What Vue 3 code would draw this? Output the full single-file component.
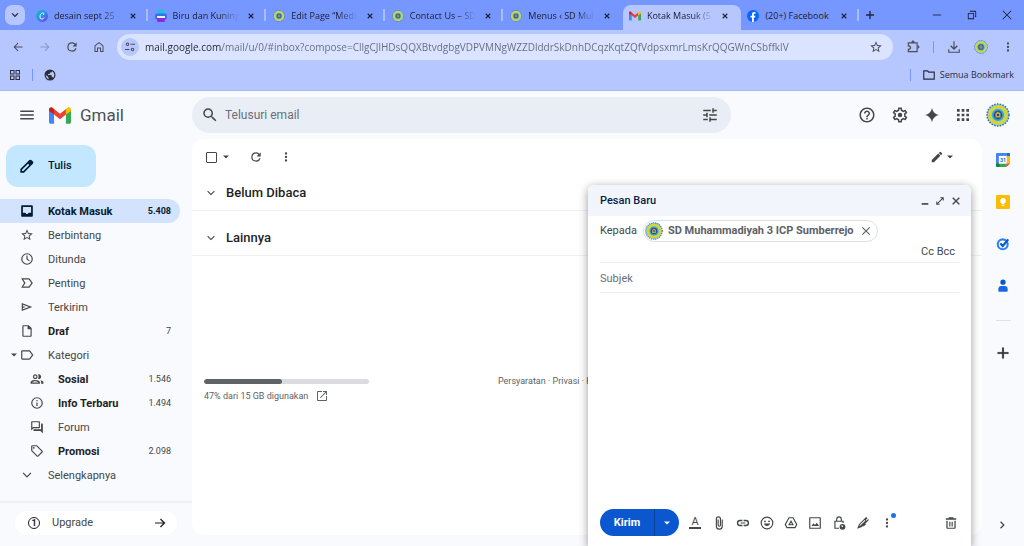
<script setup>
import { computed, h, ref } from 'vue';

const icons = {
  menu: 'M3 18h18v-2H3v2zm0-5h18v-2H3v2zm0-7v2h18V6H3z',
  search: 'M15.5 14h-.79l-.28-.27A6.47 6.47 0 0 0 16 9.5 6.5 6.5 0 1 0 9.5 16c1.61 0 3.09-.59 4.23-1.57l.27.28v.79l5 4.99L20.49 19l-4.99-5zm-6 0C7.01 14 5 11.99 5 9.5S7.01 5 9.5 5 14 7.01 14 9.5 11.99 14 9.5 14z',
  tune: 'M3 17v2h6v-2H3zM3 5v2h10V5H3zm10 16v-2h8v-2h-8v-2h-2v6h2zM7 9v2H3v2h4v2h2V9H7zm14 4v-2H11v2h10zm-6-4h2V7h4V5h-4V3h-2v6z',
  help: 'M11 18h2v-2h-2v2zm1-16C6.48 2 2 6.48 2 12s4.48 10 10 10 10-4.48 10-10S17.52 2 12 2zm0 18c-4.41 0-8-3.59-8-8s3.59-8 8-8 8 3.59 8 8-3.59 8-8 8zm0-14c-2.21 0-4 1.79-4 4h2c0-1.1.9-2 2-2s2 .9 2 2c0 2-3 1.75-3 5h2c0-2.25 3-2.5 3-5 0-2.21-1.79-4-4-4z',
  settings: 'M19.43 12.98c.04-.32.07-.64.07-.98 0-.34-.03-.66-.07-.98l2.11-1.65c.19-.15.24-.42.12-.64l-2-3.46c-.09-.16-.26-.25-.44-.25-.06 0-.12.01-.17.03l-2.49 1c-.52-.4-1.08-.73-1.69-.98l-.38-2.65C14.46 2.18 14.25 2 14 2h-4c-.25 0-.46.18-.49.42l-.38 2.65c-.61.25-1.17.59-1.69.98l-2.49-1c-.06-.02-.12-.03-.18-.03-.17 0-.34.09-.43.25l-2 3.46c-.13.22-.07.49.12.64l2.11 1.65c-.04.32-.07.65-.07.98 0 .33.03.66.07.98l-2.11 1.65c-.19.15-.24.42-.12.64l2 3.46c.09.16.26.25.44.25.06 0 .12-.01.17-.03l2.49-1c.52.4 1.08.73 1.69.98l.38 2.65c.03.24.24.42.49.42h4c.25 0 .46-.18.49-.42l.38-2.65c.61-.25 1.17-.59 1.69-.98l2.49 1c.06.02.12.03.18.03.17 0 .34-.09.43-.25l2-3.46c.12-.22.07-.49-.12-.64l-2.11-1.65zm-1.98-1.71c.04.31.05.52.05.73 0 .21-.02.43-.05.73l-.14 1.13.89.7 1.08.84-.7 1.21-1.27-.51-1.04-.42-.9.68c-.43.32-.84.56-1.25.73l-1.06.43-.16 1.13-.2 1.35h-1.4l-.19-1.35-.16-1.13-1.06-.43c-.43-.18-.83-.41-1.23-.71l-.91-.7-1.06.43-1.27.51-.7-1.21 1.08-.84.89-.7-.14-1.13c-.03-.31-.05-.54-.05-.74s.02-.43.05-.73l.14-1.13-.89-.7-1.08-.84.7-1.21 1.27.51 1.04.42.9-.68c.43-.32.84-.56 1.25-.73l1.06-.43.16-1.13.2-1.35h1.39l.19 1.35.16 1.13 1.06.43c.43.18.83.41 1.23.71l.91.7 1.06-.43 1.27-.51.7 1.21-1.07.85-.89.7.14 1.13zM12 9a3 3 0 1 0 0 6 3 3 0 0 0 0-6z',
  sparkle: 'M12 1c1 6 5 10 11 11-6 1-10 5-11 11-1-6-5-10-11-11 6-1 10-5 11-11z',
  apps: 'M3 3h4v4H3zm7 0h4v4h-4zm7 0h4v4h-4zM3 10h4v4H3zm7 0h4v4h-4zm7 0h4v4h-4zM3 17h4v4H3zm7 0h4v4h-4zm7 0h4v4h-4z',
  refresh: 'M17.65 6.35A7.96 7.96 0 0 0 12 4a8 8 0 1 0 7.73 10h-2.08A5.99 5.99 0 0 1 12 18a6 6 0 1 1 0-12c1.66 0 3.14.69 4.22 1.78L13 11h7V4l-2.35 2.35z',
  more: 'M12 8a2 2 0 1 0 0-4 2 2 0 0 0 0 4zm0 2a2 2 0 1 0 0 4 2 2 0 0 0 0-4zm0 6a2 2 0 1 0 0 4 2 2 0 0 0 0-4z',
  caret: 'M6 9l6 6 6-6z',
  edit: 'M3 17.25V21h3.75L17.81 9.94l-3.75-3.75L3 17.25zM20.71 7.04a1 1 0 0 0 0-1.41l-2.34-2.34a1 1 0 0 0-1.41 0l-1.83 1.83 3.75 3.75 1.83-1.83z',
  pen: 'M2 22v-5.500L13 5.500l2-2c1.400-1.400 2.800-1.400 4 0L20.500 5c1.400 1.200 1.400 2.600 0 4l-2 2L7.500 22zm2.500-2.500h2L15.500 10.500l-2-2-9 9z',
  inbox: 'M20 2H4c-1.100 0-2 .9-2 2v16c0 1.100.9 2 2 2h16c1.100 0 2-.9 2-2V4c0-1.100-.9-2-2-2zm-1 13h-4l-2 2h-2l-2-2H5V5h14v10z',
  star: 'M22 9.240l-7.190-.62L12 2 9.190 8.630 2 9.240l5.460 4.730L5.820 21 12 17.270 18.180 21l-1.630-7.030L22 9.240zM12 15.400l-3.760 2.270 1-4.280-3.320-2.880 4.380-.38L12 6.100l1.710 4.040 4.380.38-3.320 2.880 1 4.280L12 15.400z',
  clock: 'M12 2a10 10 0 1 0 0 20 10 10 0 0 0 0-20zm0 18a8 8 0 1 1 0-16 8 8 0 0 1 0 16zm1-14h-2v6.500l4.500 3.500 1.200-1.500-3.700-2.800z',
  important: 'M15 20H2l5-8-5-8h13c.8 0 1.400.3 1.800.9L22 12l-5.200 7.100c-.4.6-1 .9-1.800.9zm-9.500-2H15l4.500-6L15 6H5.500l4 6z',
  send: 'M3 19V5l18 7-18 7zm2-3l10.500-4L5 8v2.800l5 1.200-5 1.200V16z',
  draft: 'M15 2H6c-1.100 0-2 .9-2 2v16c0 1.100.9 2 2 2h12c1.100 0 2-.9 2-2V7l-5-5zM6 20V4h7v5h5v11H6z',
  label: 'M17.600 4.800C17.300 4.300 16.700 4 16 4H4c-1.100 0-2 .9-2 2v12c0 1.100.9 2 2 2h12c.7 0 1.300-.3 1.600-.8L23 12zM16 18H4V6h12l4.500 6z',
  people: 'M9 13.750c-2.340 0-8 1.170-8 4V20h16v-2.250c0-2.830-5.660-4-8-4zM3.500 18c.84-1 3.710-2.250 5.500-2.250s4.660 1.250 5.500 2.250h-11zM9 12c2.200 0 4-1.800 4-4s-1.800-4-4-4-4 1.800-4 4 1.800 4 4 4zm0-6a2 2 0 1 1 0 4 2 2 0 0 1 0-4zm8.500 8c1 .8 1.500 2 1.500 3.500V20h4v-2.500c0-2.020-3-3.200-5.500-3.500zM15 12c2.200 0 4-1.800 4-4s-1.800-4-4-4c-.54 0-1.040.13-1.500.35.9 1 1.300 2.200 1.300 3.650s-.4 2.700-1.300 3.650c.46.22.96.35 1.500.35z',
  info: 'M11 7h2v2h-2zm0 4h2v6h-2zm1-9a10 10 0 1 0 0 20 10 10 0 0 0 0-20zm0 18a8 8 0 1 1 0-16 8 8 0 0 1 0 16z',
  forum: 'M15 4v8H5.200L4 13.200V4h11m1-2H3c-.55 0-1 .45-1 1v15l4-4h10c.55 0 1-.45 1-1V3c0-.55-.45-1-1-1zm5 4h-2v10H6v2c0 .55.450 1 1 1h11l4 4V7c0-.55-.45-1-1-1z',
  tag: 'M21.410 11.580l-9-9C12.050 2.220 11.550 2 11 2H4c-1.100 0-2 .9-2 2v7c0 .55.22 1.050.59 1.420l9 9c.36.36.86.58 1.410.58s1.050-.22 1.410-.59l7-7c.37-.36.59-.86.59-1.410s-.23-1.060-.59-1.420zM13 20.010L4 11V4h7l9 9zM6.500 5a1.500 1.500 0 1 0 0 3 1.500 1.500 0 0 0 0-3z',
  chevron: 'M6 7.500l6 6 6-6L19.500 9 12 16.500 4.500 9z',
  next: 'M8 4.500l7.500 7.500L8 19.500l-1.800-1.800 5.700-5.700-5.700-5.700z',
  external: 'M20 20H4V4h8V2H4c-1.100 0-2 .9-2 2v16c0 1.100.9 2 2 2h16c1.100 0 2-.9 2-2v-8h-2v8zM14 2v2h4.600L7.800 14.800l1.400 1.400L20 5.400V10h2V2h-8z',
  close: 'M19 6.400L17.600 5 12 10.600 6.400 5 5 6.400l5.600 5.600L5 17.600 6.400 19l5.600-5.600 5.600 5.600 1.400-1.400-5.600-5.600z',
  closeBold: 'M20 6.500L17.500 4 12 9.500 6.500 4 4 6.500 9.500 12 4 17.500 6.500 20l5.500-5.500 5.500 5.500 2.500-2.500-5.500-5.500z',
  plus: 'M11 3h2v8h8v2h-8v8h-2v-8H3v-2h8z',
  back: 'M21 11H6.800l6-6L11.400 3.600 3 12l8.400 8.400 1.400-1.400-6-6H21z',
  forward: 'M3 11h14.200l-6-6 1.400-1.400L21 12l-8.400 8.400-1.400-1.400 6-6H3z',
  arrow: 'M2 10.800h16l-6-6L13.800 3l9 9-9 9-1.800-1.800 6-6H2z',
  home: 'M12 2L3 9v13h7v-7h4v7h7V9zm0 2.600l7 5.400v10h-3v-7H8v7H5V10z',
  grid: 'M2 2h9v9H2zm2 2v5h5V4zm9-2h9v9h-9zm2 2v5h5V4zM2 13h9v9H2zm2 2v5h5v-5zm9-2h9v9h-9zm2 2v5h5v-5z',
  globe: 'M12 1a11 11 0 1 0 0 22 11 11 0 0 0 0-22zM10 20.500c-4-1-6.500-4-6.500-8.500l5 4v2c0 1 .5 1.500 1.500 1.500zm8.500-3c-.5-1-1-1.500-2-1.500h-1v-3c0-.6-.4-1-1-1H8v-2h3c.6 0 1-.4 1-1V7h2c1.100 0 2-.9 2-2v-.6c5 2.500 6 8.600 2.500 13.100z',
  extension: 'M9.500 3.500a2.500 2.500 0 0 1 5 0V4H20v5.500h.5a2.500 2.500 0 0 1 0 5H20V21H3v-6h1.500a1.800 1.800 0 0 0 0-4H3V4h6.500zM5 6v3c5 .2 5 8 0 8.200V19h13v-6.500h2.500v-1H18V6z',
  download: 'M11 2h2v11l4-4 1.500 1.500L12 17l-6.500-6.500L7 9l4 4zM2 16h2v4h16v-4h2v6H2z',
  folder: 'M2 4h8l2 2h10v14H2zm2 2v12h16V8h-9L9 6z',
  site: 'M7 3a3.500 3.500 0 1 0 0 7 3.500 3.500 0 0 0 0-7zm0 2a1.500 1.500 0 1 1 0 3 1.500 1.500 0 0 1 0-3zm6 .5h9v2h-9zM2 16h9v2H2zm15-2.500a3.500 3.500 0 1 0 0 7 3.500 3.500 0 0 0 0-7zm0 2a1.500 1.500 0 1 1 0 3 1.500 1.500 0 0 1 0-3z',
  minimize: 'M2 11h20v2H2z',
  restore: 'M2 7h15v15H2zm2 2v11h11V9zm3-7h12c1.700 0 3 1.300 3 3v12h-3v-2h1V5c0-.6-.4-1-1-1H7z',
  windowClose: 'M21 4.200L19.800 3 12 10.800 4.200 3 3 4.200l7.800 7.800L3 19.800 4.200 21l7.800-7.800 7.800 7.800 1.200-1.200-7.800-7.800z',
  underscore: 'M4 17h16v4H4z',
  expand: 'M13 3h8v8h-2.500V7.300L7.300 18.500H11V21H3v-8h2.500v3.700L16.700 5.500H13z',
  attach: 'M17.500 6v11.500c0 2.800-2.200 5-5 5s-5-2.200-5-5V5c0-2 1.500-3.500 3.500-3.500S14.500 3 14.500 5v10.500c0 1.200-.8 2-2 2s-2-.8-2-2V6M7.500 6v11',
  link: 'M3.900 12c0-1.710 1.390-3.100 3.100-3.100h4V6.500H7a5.500 5.500 0 0 0 0 11h4v-2.400H7c-1.710 0-3.100-1.390-3.100-3.100zM8 13h8v-2H8v2zm9-6.500h-4v2.400h4a3.100 3.100 0 0 1 0 6.200h-4v2.400h4a5.500 5.500 0 0 0 0-11z',
  emoji: 'M12 1a11 11 0 1 0 0 22 11 11 0 0 0 0-22zm0 20a9 9 0 1 1 0-18 9 9 0 0 1 0 18zM8.500 7.500a1.600 1.600 0 1 0 0 3.200 1.600 1.600 0 0 0 0-3.200zm7 0a1.600 1.600 0 1 0 0 3.200 1.600 1.600 0 0 0 0-3.200zM6.500 13c1.800 5.600 9.200 5.600 11 0z',
  drive: 'M8 2h8l7 12.500L19.500 21h-15L1 14.500zm1.200 2L3.300 14.500 5.700 19h12.600l2.400-4.500L14.800 4zM12 7l5 9H7zm0 4l-1.800 3.200h3.600z',
  image: 'M21 2H3c-.6 0-1 .4-1 1v18c0 .6.4 1 1 1h18c.6 0 1-.4 1-1V3c0-.6-.4-1-1-1zm-1 18H4V4h16zM6 17l3.500-4.500 2.500 3 3-4L19 17z',
  lock: 'M17 8V5.500a5 5 0 0 0-10 0V8H4v14h8v-2H6V10h12v2h2V8zM9 8V5.500a3 3 0 0 1 6 0V8zm9 5.500a5 5 0 1 0 0 10 5 5 0 0 0 0-10zm1 5.500h-2.500v-3.500H18v2.200h1z',
  signature: 'M2 22l3-8L16 3c1-1 2-1 3 0l.8.8-3 3L18 8l3-3c1 1 1 2 0 3L10 19zm4-4.500L16 8l-1.300-1.300L6.500 15zM12 17l4-4 1.200 1.200-4 4z',
  trash: 'M8 2h8v2h5v2.500H3V4h5zM4 8h16v12c0 1.100-.9 2-2 2H6c-1.100 0-2-.9-2-2zm2.200 0v12h11.600V8zM9 10h2v8H9zm4 0h2v8h-2z',
};

const Icon = (props) => h('svg', { class: 'icon', viewBox: '0 0 24 24', 'aria-hidden': 'true' }, [
  h('path', { d: icons[props.name] }),
]);
Icon.props = ['name'];

const tabs = [
  { title: 'desain sept 25 -', icon: 'canva' },
  { title: 'Biru dan Kuning', icon: 'print' },
  { title: 'Edit Page “Medi', icon: 'emblem' },
  { title: 'Contact Us – SD', icon: 'emblem' },
  { title: 'Menus ‹ SD Muh', icon: 'emblem' },
  { title: 'Kotak Masuk (5.', icon: 'gmail', active: true },
  { title: '(20+) Facebook', icon: 'facebook' },
];

const folders = [
  { name: 'Kotak Masuk', icon: 'inbox', count: '5.408', bold: true, active: true },
  { name: 'Berbintang', icon: 'star' },
  { name: 'Ditunda', icon: 'clock' },
  { name: 'Penting', icon: 'important' },
  { name: 'Terkirim', icon: 'send' },
  { name: 'Draf', icon: 'draft', count: '7', bold: true },
  { name: 'Kategori', icon: 'label', open: true },
  { name: 'Sosial', icon: 'people', count: '1.546', bold: true, nested: true },
  { name: 'Info Terbaru', icon: 'info', count: '1.494', bold: true, nested: true },
  { name: 'Forum', icon: 'forum', nested: true },
  { name: 'Promosi', icon: 'tag', count: '2.098', bold: true, nested: true },
  { name: 'Selengkapnya', icon: 'chevron' },
];

const sections = ['Belum Dibaca', 'Lainnya'];

const composeTools = [
  { name: 'link', label: 'Sisipkan link' },
  { name: 'emoji', label: 'Sisipkan emoji' },
  { name: 'drive', label: 'Sisipkan file dari Drive' },
  { name: 'image', label: 'Sisipkan foto' },
  { name: 'lock', label: 'Mode rahasia' },
  { name: 'signature', label: 'Sisipkan tanda tangan' },
];

const url = ref('mail.google.com/mail/u/0/#inbox?compose=CllgCJlHDsQQXBtvdgbgVDPVMNgWZZDlddrSkDnhDCqzKqtZQfVdpsxmrLmsKrQQGWnCSbffklV');
const query = ref('');
const allSelected = ref(false);
const subject = ref('');
const message = ref('');
const storageUsed = ref(47);
const storageStyle = computed(() => ({ width: `${storageUsed.value}%` }));
</script>

<template>
  <div class="browser">
    <svg class="sprites" aria-hidden="true">
      <symbol id="emblem" viewBox="0 0 24 24">
        <circle cx="12" cy="12" r="11" fill="#8fc9e0" stroke="#3b6ea8" stroke-width="1.500" stroke-dasharray="1.500 1.300" />
        <circle cx="12" cy="12" r="8.300" fill="none" stroke="#d8d52c" stroke-width="3" />
        <circle cx="12" cy="12" r="6" fill="#3fa4bd" />
        <circle cx="12" cy="12" r="4.400" fill="#24508f" />
        <path d="M9.500 10.500l2.500-2 2.500 2v4h-5z" fill="#c8a94c" />
        <path d="M11 11h2v2h-2z" fill="#1c4585" />
      </symbol>
      <symbol id="gmail" viewBox="0 0 24 18">
        <path d="M0 3v13.400C0 17.300.7 18 1.600 18h3.900V7.500z" fill="#4285f4" />
        <path d="M24 3v13.400c0 .9-.7 1.600-1.600 1.600h-3.900V7.500z" fill="#34a853" />
        <path d="M5.500 2L12 7l6.500-5v6L12 13 5.500 8z" fill="#ea4335" />
        <path d="M0 3.500V2.400C0 .4 2.300-.7 3.900.5L5.500 2v6L0 4z" fill="#c5221f" />
        <path d="M24 3.500V2.400c0-2-2.300-3.100-3.900-1.900L18.500 2v6L24 4z" fill="#fbbc04" />
      </symbol>
      <linearGradient id="canva-fill" x1="0" y1="0" x2="1" y2="1">
        <stop offset="0" stop-color="#00c4cc" />
        <stop offset="0.500" stop-color="#2f8fe8" />
        <stop offset="1" stop-color="#7d2ae8" />
      </linearGradient>
      <symbol id="canva" viewBox="0 0 24 24">
        <circle cx="12" cy="12" r="12" fill="url(#canva-fill)" />
        <path d="M15.500 9c1-2-.5-3.500-2.500-3-3 .7-5 4-5 7.500s2 5 4.500 4.500c1.500-.3 2.700-1.300 3.500-2.500" fill="none" stroke="#fff" stroke-width="2" stroke-linecap="round" />
      </symbol>
      <symbol id="print" viewBox="0 0 24 24">
        <path d="M6 0h12l2 8H4z" fill="#16c7d6" />
        <rect y="7" width="24" height="12" rx="4" fill="#3b6fe6" />
        <path d="M3 16h18l-2 8H5z" fill="#8a2be2" />
        <path d="M4 12h16v4H4z" fill="#e8f2ff" />
      </symbol>
      <symbol id="facebook" viewBox="0 0 24 24">
        <circle cx="12" cy="12" r="12" fill="#0866ff" />
        <path d="M10 24v-9H7v-3.500h3V9c0-3.200 1.800-4.800 4.600-4.800l2.400.2v3h-1.600c-1.300 0-1.700.8-1.700 1.700v2.400h3.100l-.6 3.500h-2.500v9z" fill="#fff" />
      </symbol>
    </svg>

    <div class="tab-strip">
      <button type="button" class="tab-search" aria-label="Telusuri tab"><Icon name="chevron" class="icon--10 icon--heavy" /></button>
      <div class="tabs" role="tablist">
        <div v-for="tab in tabs" :key="tab.title" class="tab" :class="{ 'tab--active': tab.active }" role="tab">
          <svg class="tab__icon"><use :href="`#${tab.icon}`" /></svg>
          <span class="tab__title">{{ tab.title }}</span>
          <button type="button" class="tab__close" aria-label="Tutup tab"><Icon name="closeBold" class="icon--8" /></button>
        </div>
      </div>
      <button type="button" class="new-tab" aria-label="Tab baru"><Icon name="plus" class="icon--10 icon--heavy" /></button>
      <div class="window-controls">
        <button type="button" aria-label="Minimalkan"><Icon name="minimize" class="icon--10" /></button>
        <button type="button" aria-label="Pulihkan"><Icon name="restore" class="icon--10" /></button>
        <button type="button" aria-label="Tutup"><Icon name="windowClose" class="icon--12" /></button>
      </div>
    </div>

    <div class="chrome">
      <div class="toolbar">
        <button type="button" aria-label="Kembali"><Icon name="back" class="icon--12" /></button>
        <button type="button" class="is-disabled" aria-label="Maju"><Icon name="forward" class="icon--12" /></button>
        <button type="button" aria-label="Muat ulang"><Icon name="refresh" class="icon--14" /></button>
        <button type="button" aria-label="Beranda"><Icon name="home" class="icon--12" /></button>
        <div class="omnibox">
          <button type="button" class="omnibox__site" aria-label="Info situs"><Icon name="site" class="icon--12" /></button>
          <input v-model="url" class="omnibox__input" type="text" aria-label="Alamat" />
          <button type="button" class="omnibox__star" aria-label="Bookmark"><Icon name="star" class="icon--14" /></button>
        </div>
        <div class="toolbar__end">
          <button type="button" aria-label="Ekstensi"><Icon name="extension" class="icon--14" /></button>
          <span class="divider"></span>
          <button type="button" aria-label="Download"><Icon name="download" class="icon--14" /></button>
          <button type="button" aria-label="Profil"><svg class="emblem emblem--14"><use href="#emblem" /></svg></button>
          <button type="button" aria-label="Menu"><Icon name="more" class="icon--14" /></button>
        </div>
      </div>
      <div class="bookmarks">
        <button type="button" aria-label="Aplikasi"><Icon name="grid" class="icon--12" /></button>
        <span class="divider"></span>
        <button type="button" aria-label="Bookmark situs"><Icon name="globe" class="icon--12" /></button>
        <span class="divider bookmarks__divider"></span>
        <button type="button" class="bookmarks__all"><Icon name="folder" class="icon--14" />Semua Bookmark</button>
      </div>
    </div>

    <div class="mail">
      <header class="header">
        <div class="brand">
          <button type="button" aria-label="Menu utama"><Icon name="menu" class="icon--18" /></button>
          <svg class="brand__logo"><use href="#gmail" /></svg>
          <span class="brand__name">Gmail</span>
        </div>
        <label class="search">
          <Icon name="search" class="icon--18" />
          <input v-model="query" type="text" placeholder="Telusuri email" aria-label="Telusuri email" />
          <button type="button" aria-label="Opsi penelusuran"><Icon name="tune" class="icon--18" /></button>
        </label>
        <div class="header__actions">
          <button type="button" aria-label="Dukungan"><Icon name="help" class="icon--18" /></button>
          <button type="button" aria-label="Setelan"><Icon name="settings" class="icon--18" /></button>
          <button type="button" aria-label="Gemini"><Icon name="sparkle" /></button>
          <button type="button" aria-label="Aplikasi Google"><Icon name="apps" /></button>
          <button type="button" aria-label="Akun"><svg class="emblem emblem--24"><use href="#emblem" /></svg></button>
        </div>
      </header>

      <div class="layout">
        <aside class="sidebar">
          <button type="button" class="compose-button"><Icon name="pen" />Tulis</button>
          <nav class="folders">
            <a
              v-for="folder in folders"
              :key="folder.name"
              href="#"
              class="folder"
              :class="{ 'folder--active': folder.active, 'folder--bold': folder.bold, 'folder--nested': folder.nested }"
            >
              <span class="folder__caret"><Icon v-if="folder.open" name="caret" class="icon--12" /></span>
              <Icon :name="folder.icon" class="icon--14" />
              <span class="folder__name">{{ folder.name }}</span>
              <span v-if="folder.count" class="folder__count">{{ folder.count }}</span>
            </a>
          </nav>
          <div class="upgrade">
            <button type="button" class="upgrade__button">
              <span class="upgrade__badge">1</span>
              Upgrade
              <Icon name="arrow" class="icon--12 upgrade__arrow" />
            </button>
          </div>
        </aside>

        <main class="inbox">
          <div class="actions">
            <input v-model="allSelected" type="checkbox" class="actions__check" aria-label="Pilih semua" />
            <button type="button" aria-label="Pilih"><Icon name="caret" class="icon--12" /></button>
            <button type="button" class="actions__refresh" aria-label="Muat ulang"><Icon name="refresh" class="icon--14" /></button>
            <button type="button" class="actions__more" aria-label="Lainnya"><Icon name="more" class="icon--14" /></button>
            <button type="button" class="actions__input" aria-label="Alat input">
              <Icon name="edit" class="icon--14" /><Icon name="caret" class="icon--12" />
            </button>
          </div>
          <section v-for="section in sections" :key="section" class="section">
            <Icon name="chevron" class="icon--12" />
            <h2>{{ section }}</h2>
          </section>
          <footer class="footer">
            <div class="storage">
              <div class="storage__bar"><div class="storage__used" :style="storageStyle"></div></div>
              <a href="#" class="storage__link">{{ storageUsed }}% dari 15 GB digunakan<Icon name="external" class="icon--12" /></a>
            </div>
            <p class="footer__links">
              <a href="#">Persyaratan</a> · <a href="#">Privasi</a> · <a href="#">Kebijakan Program</a>
            </p>
          </footer>
        </main>

        <aside class="rail">
          <button type="button" aria-label="Kalender">
            <svg class="rail__icon" viewBox="0 0 24 24">
              <path d="M2 0h16v5H5v19H2c-1.100 0-2-.9-2-2V2C0 .9.9 0 2 0z" fill="#4285f4" />
              <path d="M18 0h4c1.100 0 2 .9 2 2v4h-6z" fill="#1967d2" />
              <path d="M18 5h6v13h-6z" fill="#fbbc04" />
              <path d="M5 18h13v6H5z" fill="#34a853" />
              <path d="M0 18h6v6H2c-1.100 0-2-.9-2-2z" fill="#188038" />
              <path d="M18 18h6l-6 6z" fill="#ea4335" />
              <path d="M5 5h13v13H5z" fill="#fff" />
              <text x="12" y="15" class="rail__date" text-anchor="middle">31</text>
            </svg>
          </button>
          <button type="button" aria-label="Keep">
            <svg class="rail__icon" viewBox="0 0 24 24">
              <rect width="24" height="24" rx="2" fill="#fbbc04" />
              <path d="M12 5a5 5 0 0 0-2.500 9.300V16h5v-1.700A5 5 0 0 0 12 5zM10 17h4v2h-4z" fill="#fff" />
            </svg>
          </button>
          <button type="button" aria-label="Tasks">
            <svg class="rail__icon" viewBox="0 0 24 24">
              <circle cx="11.500" cy="12.500" r="8.500" fill="none" stroke="#2684fc" stroke-width="3.600" />
              <path d="M7.500 11l4 4.500L21 4" fill="none" stroke="#0b57d0" stroke-width="3.600" />
            </svg>
          </button>
          <button type="button" aria-label="Kontak">
            <svg class="rail__icon" viewBox="0 0 24 24">
              <circle cx="12" cy="5.500" r="4.500" fill="#0b57d0" />
              <path d="M4 17c0-3 2-5 5-5h6c3 0 5 2 5 5v3c0 1.100-.9 2-2 2H6c-1.100 0-2-.9-2-2z" fill="#1a68e0" />
            </svg>
          </button>
          <span class="rail__divider"></span>
          <button type="button" class="rail__add" aria-label="Instal add-on"><Icon name="plus" class="icon--14 icon--heavy" /></button>
          <button type="button" class="rail__toggle" aria-label="Sembunyikan panel"><Icon name="next" class="icon--12" /></button>
        </aside>
      </div>

      <form class="compose" @submit.prevent>
        <div class="compose__header">
          <h3>Pesan Baru</h3>
          <button type="button" aria-label="Minimalkan"><Icon name="underscore" class="icon--10" /></button>
          <button type="button" aria-label="Layar penuh"><Icon name="expand" class="icon--10" /></button>
          <button type="button" aria-label="Tutup"><Icon name="close" class="icon--12 icon--heavy" /></button>
        </div>
        <div class="compose__to">
          <div class="compose__recipients">
            <span>Kepada</span>
            <span class="chip">
              <svg class="emblem emblem--18"><use href="#emblem" /></svg>
              SD Muhammadiyah 3 ICP Sumberrejo
              <button type="button" aria-label="Hapus penerima"><Icon name="close" class="icon--14" /></button>
            </span>
          </div>
          <div class="compose__copies"><a href="#">Cc</a> <a href="#">Bcc</a></div>
        </div>
        <input v-model="subject" class="compose__subject" type="text" placeholder="Subjek" aria-label="Subjek" />
        <textarea v-model="message" class="compose__message" aria-label="Isi pesan"></textarea>
        <div class="compose__footer">
          <div class="send">
            <button type="submit" class="send__main">Kirim</button>
            <button type="button" class="send__more" aria-label="Opsi kirim lainnya"><Icon name="caret" class="icon--12" /></button>
          </div>
          <button type="button" class="tool" aria-label="Opsi format"><span class="tool__letter">A</span></button>
          <button type="button" class="tool" aria-label="Lampirkan file"><Icon name="attach" class="icon--14 icon--outline" /></button>
          <button v-for="tool in composeTools" :key="tool.name" type="button" class="tool" :aria-label="tool.label">
            <Icon :name="tool.name" class="icon--14" />
          </button>
          <button type="button" class="tool tool--notice" aria-label="Opsi lainnya"><Icon name="more" class="icon--14" /></button>
          <button type="button" class="tool tool--trash" aria-label="Hapus draf"><Icon name="trash" class="icon--14" /></button>
        </div>
      </form>
    </div>
  </div>
</template>

<style>
body {
  margin: 0;
}
</style>

<style scoped>
.browser {
  display: flex;
  flex-direction: column;
  min-height: 100vh;
  background: #f8fafd;
  color: #444746;
  font-family: Roboto, 'Liberation Sans', sans-serif;
  font-size: 11px;
  line-height: 16px;
}

.browser *,
.browser *::after {
  box-sizing: border-box;
}

.sprites {
  position: absolute;
  width: 0;
  height: 0;
}

button {
  display: flex;
  align-items: center;
  justify-content: center;
  flex: none;
  padding: 0;
  border: 0;
  background: none;
  color: inherit;
  font: inherit;
  cursor: pointer;
}

input,
textarea {
  min-width: 0;
  padding: 0;
  border: 0;
  outline: 0;
  background: none;
  color: inherit;
  font: inherit;
}

a {
  color: inherit;
  text-decoration: none;
}

h2,
h3,
p {
  margin: 0;
}

.icon {
  flex: none;
  width: 16px;
  height: 16px;
  fill: currentColor;
}

.icon--8 { width: 8px; height: 8px; }
.icon--10 { width: 10px; height: 10px; }
.icon--12 { width: 12px; height: 12px; }
.icon--14 { width: 14px; height: 14px; }
.icon--18 { width: 18px; height: 18px; }

.icon--heavy {
  stroke: currentColor;
  stroke-width: 1;
}

.icon--outline {
  fill: none;
  stroke: currentColor;
  stroke-width: 2;
}

.emblem--14 { width: 14px; height: 14px; }
.emblem--18 { width: 18px; height: 18px; }
.emblem--24 { width: 24px; height: 24px; }

/* browser window */
.tab-strip {
  display: flex;
  align-items: center;
  height: 30px;
  padding-left: 5px;
  background: #7697ff;
  color: #1b1d29;
  font-family: 'Open Sans', 'Noto Sans', sans-serif;
  font-size: 9px;
}

.tab-search {
  width: 20px;
  height: 20px;
  margin-right: 5px;
  border-radius: 7px;
  background: #b6c7ff;
}

.tabs {
  display: flex;
  align-self: stretch;
  flex: 0 1 830px;
  min-width: 0;
  padding-top: 5px;
}

.tab {
  position: relative;
  display: flex;
  align-items: center;
  flex: 1 1 0;
  min-width: 0;
  padding: 0 12px 4px 6px;
}

.tab::after {
  content: '';
  position: absolute;
  top: 4px;
  right: 1px;
  width: 2px;
  height: 12px;
  background: #a9bdff;
}

.tab--active {
  border-radius: 8px 8px 0 0;
  background: #b6c7ff;
}

.tab--active::after,
.tab:has(+ .tab--active)::after {
  display: none;
}

.tab__icon {
  flex: none;
  width: 12px;
  height: 12px;
}

.tab__title {
  flex: 1;
  overflow: hidden;
  margin: 0 8px 0 6px;
  white-space: nowrap;
  mask-image: linear-gradient(to right, #000 70%, transparent 100%);
}

.tab:last-child .tab__title {
  mask-image: none;
}

.new-tab {
  width: 20px;
  height: 20px;
}

.window-controls {
  display: flex;
  margin-left: auto;
}

.window-controls button {
  width: 35px;
  height: 30px;
}

.chrome {
  border-bottom: 1px solid #a9b9ee;
  background: #b6c7ff;
  color: #4a4d58;
}

.toolbar {
  display: flex;
  align-items: center;
  height: 34px;
  padding-left: 4px;
}

.toolbar > button {
  width: 27px;
  height: 26px;
}

.toolbar .is-disabled {
  color: #8c97bd;
}

.omnibox {
  display: flex;
  align-items: center;
  flex: 1;
  height: 26px;
  margin-left: 5px;
  padding: 0 10px 0 4px;
  border-radius: 13px;
  background: #dae3ff;
}

.omnibox__site {
  width: 18px;
  height: 18px;
  margin-right: 6px;
  border-radius: 50%;
  background: #b6c7ff;
}

/* the host is darker than the path that follows it */
.omnibox__input {
  flex: 1;
  background: linear-gradient(to right, #23252f 77px, #666a7a 77px);
  background-clip: text;
  color: transparent;
  font-family: 'Open Sans', 'Noto Sans', sans-serif;
  font-size: 10px;
}

.toolbar__end {
  display: flex;
  align-items: center;
  gap: 13px;
  padding: 0 9px 0 13px;
}

.divider {
  width: 1px;
  height: 12px;
  background: #7697ff;
}

.bookmarks {
  display: flex;
  align-items: center;
  height: 26px;
  padding: 0 10px 4px 9px;
  color: #2c2e38;
  font-family: 'Open Sans', 'Noto Sans', sans-serif;
  font-size: 9px;
}

.bookmarks .divider {
  margin: 0 11px;
}

.bookmarks .bookmarks__divider {
  margin-left: auto;
}

.bookmarks__all {
  gap: 4px;
}

/* mail */
.mail {
  position: relative;
  display: flex;
  flex-direction: column;
  flex: 1;
}

.header {
  display: flex;
  align-items: center;
  height: 48px;
}

.brand {
  display: flex;
  align-items: center;
  flex: none;
  width: 192px;
  padding-left: 18px;
}

.brand__logo {
  width: 22px;
  height: 17px;
  margin: 0 9px 0 13px;
}

.brand__name {
  color: #4d5156;
  font-size: 17px;
  line-height: 24px;
}

.search {
  display: flex;
  align-items: center;
  flex: 0 1 539px;
  height: 36px;
  padding: 0 12px 0 9px;
  border-radius: 18px;
  background: #e9eef6;
}

.search input {
  flex: 1;
  margin-left: 6px;
  font-size: 12px;
}

.search input::placeholder {
  color: #6b6f76;
}

.header__actions {
  display: flex;
  align-items: center;
  gap: 15px;
  margin-left: auto;
  padding-right: 14px;
}

.layout {
  display: flex;
  flex: 1;
}

.sidebar {
  display: flex;
  flex-direction: column;
  flex: none;
  width: 192px;
}

.compose-button {
  gap: 13px;
  justify-content: flex-start;
  width: 90px;
  height: 42px;
  margin: 6px 0 12px 6px;
  padding-left: 13px;
  border-radius: 12px;
  background: #c2e7ff;
  color: #001d35;
  font-weight: 500;
}

.folders {
  display: flex;
  flex-direction: column;
  width: 180px;
}

.folder {
  display: flex;
  align-items: center;
  height: 24px;
  padding-right: 9px;
  border-radius: 0 12px 12px 0;
}

.folder__caret {
  display: flex;
  justify-content: flex-end;
  width: 20px;
}

.folder__name {
  margin-left: 14px;
  padding-top: 1px;
}

.folder--nested .folder__caret {
  width: 30px;
}

.folder__count {
  margin-left: auto;
  font-size: 9px;
  font-weight: 400;
}

.folder--bold {
  color: #1f1f1f;
  font-weight: 700;
}

.folder--bold .folder__count,
.folder--bold .icon {
  color: #444746;
}

.folder--active {
  background: #d3e3fd;
}

.folder--active .icon,
.folder--active .folder__name,
.folder--active .folder__count {
  color: #001d35;
  font-weight: 700;
}

.upgrade {
  margin-top: 14px;
  padding: 8px 15px 12px;
  border-top: 2px solid #edeff3;
}

.upgrade__button {
  justify-content: flex-start;
  width: 100%;
  height: 24px;
  padding: 0 11px 0 13px;
  border-radius: 12px;
  background: #fff;
}

.upgrade__badge {
  width: 12px;
  height: 12px;
  margin-right: 12px;
  border: 1px solid #1f1f1f;
  border-radius: 50%;
  color: #1f1f1f;
  font-size: 9px;
  font-weight: 700;
  line-height: 10px;
}

.upgrade__arrow {
  margin-left: auto;
  color: #1f1f1f;
}

.inbox {
  flex: 1;
  min-width: 0;
  margin-bottom: 12px;
  border-radius: 12px;
  background: #fff;
}

.actions {
  display: flex;
  align-items: center;
  height: 27px;
  padding: 9px 26px 0 14px;
}

.actions__check {
  width: 11px;
  height: 11px;
  margin: 0 3px 0 0;
  border: 1px solid #444746;
  border-radius: 1px;
  appearance: none;
}

.actions__check:checked {
  background: #444746;
}

.actions__refresh {
  margin-left: 17px;
}

.actions__more {
  margin-left: 16px;
}

.actions__input {
  margin-left: auto;
}

.section {
  display: flex;
  align-items: center;
  gap: 9px;
  height: 45px;
  padding: 10px 13px 0;
  border-bottom: 1px solid #f0f1f2;
}

.section h2 {
  color: #1f1f1f;
  font-size: 13px;
  font-weight: 500;
  line-height: 20px;
}

.footer {
  display: grid;
  grid-template-columns: 1fr auto 1fr;
  padding: 117px 26px 0 12px;
  color: #5e6165;
  font-size: 9px;
}

.storage {
  padding-top: 6px;
}

.storage__bar {
  width: 165px;
  height: 5px;
  overflow: hidden;
  border-radius: 3px;
  background: #dadce0;
}

.storage__used {
  height: 100%;
  border-radius: 3px;
  background: #5f6368;
}

.storage__link {
  display: inline-flex;
  align-items: center;
  gap: 8px;
  margin-top: 4px;
}

.rail {
  display: flex;
  flex-direction: column;
  align-items: center;
  flex: none;
  width: 42px;
  padding: 13px 0 14px;
}

.rail button {
  width: 16px;
  height: 16px;
  margin-bottom: 26px;
}

.rail__icon {
  width: 14px;
  height: 14px;
}

.rail__date {
  fill: #1967d2;
  font-size: 9px;
  font-weight: 700;
}

.rail__divider {
  width: 15px;
  height: 1px;
  margin-bottom: 24px;
  background: #dfe1e5;
}

.rail .rail__add {
  color: #1f1f1f;
}

.rail .rail__toggle {
  margin: auto 0 0;
}

/* message window floats over the inbox */
.compose {
  position: absolute;
  top: 94px;
  right: 53px;
  bottom: 0;
  display: flex;
  flex-direction: column;
  width: 383px;
  border-radius: 6px 6px 0 0;
  background: #fff;
  box-shadow: 0 2px 10px rgba(0, 0, 0, 0.4);
}

.compose__header {
  display: flex;
  align-items: center;
  gap: 5px;
  height: 31px;
  padding: 0 9px 0 12px;
  border-radius: 6px 6px 0 0;
  background: #f2f6fc;
}

.compose__header h3 {
  flex: 1;
  color: #041e49;
  font-size: 11px;
  font-weight: 500;
}

.compose__to {
  margin: 0 12px;
  padding: 4px 0 2px;
  border-bottom: 1px solid #eceef0;
}

.compose__recipients {
  display: flex;
  align-items: center;
  gap: 6px;
}

.chip {
  display: flex;
  align-items: center;
  gap: 5px;
  height: 22px;
  padding: 0 4px 0 1px;
  border: 1px solid #dcdfe3;
  border-radius: 11px;
  color: #5e6165;
  font-weight: 700;
}

.compose__copies {
  padding: 2px 4px 0 0;
  text-align: right;
}

.compose__subject {
  height: 30px;
  margin: 0 12px;
  padding-top: 2px;
  border-bottom: 1px solid #eceef0;
}

.compose__subject::placeholder {
  color: #6b6f76;
}

.compose__message {
  flex: 1;
  min-height: 0;
  margin: 8px 12px;
  resize: none;
}

.compose__footer {
  display: flex;
  align-items: center;
  padding: 0 8px 11px 12px;
}

.send {
  display: flex;
  height: 27px;
  margin-right: 4px;
  overflow: hidden;
  border-radius: 14px;
  background: #0b57d0;
  color: #fff;
  font-weight: 700;
}

.send__main {
  width: 55px;
  border-right: 1px solid #0a3f9c;
}

.send__more {
  width: 24px;
}

.tool {
  position: relative;
  width: 24px;
  height: 24px;
}

.tool__letter {
  width: 12px;
  border-bottom: 2px solid #444746;
  font-size: 11px;
  line-height: 11px;
}

.tool--notice::after {
  content: '';
  position: absolute;
  top: 2px;
  right: 3px;
  width: 5px;
  height: 5px;
  border-radius: 50%;
  background: #1a73e8;
}

.tool--trash {
  margin-left: auto;
}
</style>
